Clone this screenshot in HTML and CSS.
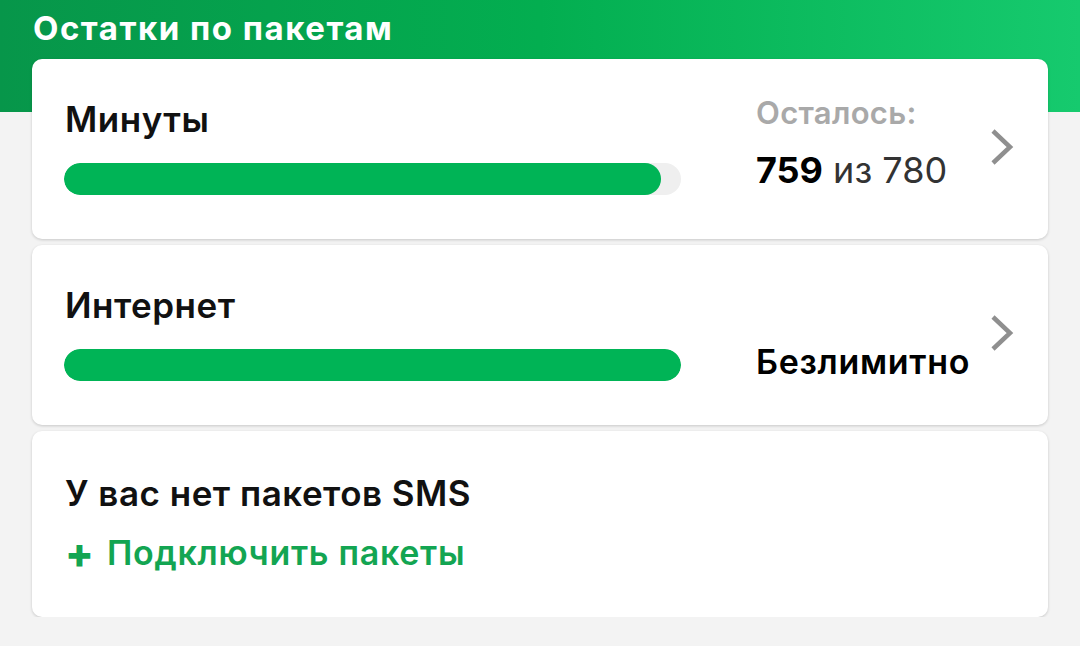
FILE: index.html
```html
<!DOCTYPE html>
<html lang="ru">

<head>
    <meta charset="utf-8">
    <meta name="viewport" content="width=device-width, initial-scale=1.0">
    <link rel="stylesheet" href="styles.css">
</head>

<body>

    <h1 class="page-title">Остатки по пакетам</h1>

    <div class="packs">
        <!-- Minutes -->
        <div class="pack-card">
            <div class="pack-main">
                <div class="pack-name">Минуты</div>
                <div class="progress">
                    <div class="progress-fill" style="width: 96.8%"></div>
                </div>
            </div>
            <div class="pack-info">
                <div class="pack-label">Осталось:</div>
                <div class="pack-value"><b>759</b> из 780</div>
            </div>
            <svg class="chevron" viewBox="0 0 24 38" width="24" height="38">
                <path d="M3 3 L20 19 L3 35" fill="none" stroke="#8f8f8f" stroke-width="4.5" />
            </svg>
        </div>

        <!-- Internet -->
        <div class="pack-card">
            <div class="pack-main">
                <div class="pack-name">Интернет</div>
                <div class="progress">
                    <div class="progress-fill" style="width: 100%"></div>
                </div>
            </div>
            <div class="pack-info pack-info-bottom">
                <div class="pack-unlimited">Безлимитно</div>
            </div>
            <svg class="chevron" viewBox="0 0 24 38" width="24" height="38">
                <path d="M3 3 L20 19 L3 35" fill="none" stroke="#8f8f8f" stroke-width="4.5" />
            </svg>
        </div>

        <!-- SMS -->
        <div class="pack-card pack-card-empty">
            <div class="pack-name">У вас нет пакетов SMS</div>
            <a class="pack-add" href="#"><span class="plus">+</span>Подключить пакеты</a>
        </div>
    </div>

</body>

</html>
```

FILE: styles.css
```css
* {
    box-sizing: border-box;
}

body {
    margin: 0;
    font-family: "Inter", "Liberation Sans", sans-serif;
    color: #111;
    background:
        linear-gradient(90deg, #07964a 0%, #03ae50 50%, #16ca6e 100%) top / 100% 112px no-repeat,
        #f3f3f3;
}

/* Green header */
.page-title {
    margin: 0;
    padding: 8px 33px 0;
    height: 59px;
    font-size: 33px;
    line-height: 40px;
    font-weight: 700;
    letter-spacing: 1.5px;
    color: #fff;
}

/* Cards list */
.packs {
    display: flex;
    flex-direction: column;
    gap: 6px;
    margin: 0 32px;
}

.pack-card {
    display: flex;
    align-items: flex-start;
    height: 180px;
    padding: 40px 34px 0 32px;
    background: #fff;
    border-radius: 10px;
    box-shadow: 0 1px 3px rgba(0, 0, 0, 0.18);
}

.pack-main {
    width: 617px;
}

.pack-name {
    font-size: 35px;
    line-height: 40px;
    font-weight: 600;
    letter-spacing: 0.5px;
    padding-left: 1px;
}

.progress {
    height: 32px;
    margin-top: 24px;
    border-radius: 16px;
    background: #efefef;
    overflow: hidden;
}

.progress-fill {
    height: 100%;
    border-radius: 16px;
    background: #00b456;
}

/* Right column */
.pack-info {
    flex: 1;
    margin-left: 75px;
    align-self: stretch;
}

.pack-info-bottom {
    display: flex;
    align-items: flex-end;
    padding-bottom: 43px;
}

.pack-label {
    margin-top: -6px;
    font-size: 31px;
    line-height: 40px;
    font-weight: 600;
    letter-spacing: 0.3px;
    color: #a9a9a9;
}

.pack-value {
    margin-top: 15px;
    font-size: 36px;
    line-height: 44px;
    color: #333;
}

.pack-value b {
    font-weight: 700;
    color: #000;
}

.pack-unlimited {
    font-size: 34px;
    line-height: 40px;
    font-weight: 600;
    letter-spacing: 0.7px;
    color: #000;
}

.chevron {
    flex: none;
    align-self: center;
    margin-bottom: 45px;
}

/* Empty package card */
.pack-card-empty {
    flex-direction: column;
    height: 186px;
    padding-top: 42px;
}

.pack-add {
    display: flex;
    align-items: center;
    margin-top: 20px;
    padding-left: 1px;
    font-size: 34px;
    line-height: 40px;
    font-weight: 600;
    letter-spacing: 0.7px;
    color: #13a552;
    text-decoration: none;
}

.pack-add .plus {
    width: 42px;
    font-size: 42px;
    font-weight: 800;
}
```
